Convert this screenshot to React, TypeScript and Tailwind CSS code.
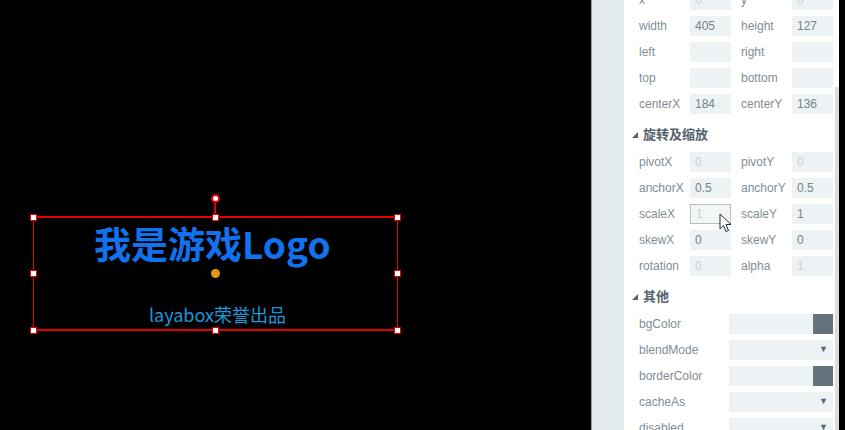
type Cell = { label: string; value?: string; dim?: boolean; focus?: boolean };

const layoutRows: [Cell, Cell][] = [
  [{ label: "x", value: "0", dim: true }, { label: "y", value: "0", dim: true }],
  [{ label: "width", value: "405" }, { label: "height", value: "127" }],
  [{ label: "left" }, { label: "right" }],
  [{ label: "top" }, { label: "bottom" }],
  [{ label: "centerX", value: "184" }, { label: "centerY", value: "136" }],
];

const transformRows: [Cell, Cell][] = [
  [{ label: "pivotX", value: "0", dim: true }, { label: "pivotY", value: "0", dim: true }],
  [{ label: "anchorX", value: "0.5" }, { label: "anchorY", value: "0.5" }],
  [{ label: "scaleX", value: "1", dim: true, focus: true }, { label: "scaleY", value: "1" }],
  [{ label: "skewX", value: "0" }, { label: "skewY", value: "0" }],
  [{ label: "rotation", value: "0", dim: true }, { label: "alpha", value: "1", dim: true }],
];

const otherRows = [
  { label: "bgColor", kind: "color" },
  { label: "blendMode", kind: "select" },
  { label: "borderColor", kind: "color" },
  { label: "cacheAs", kind: "select" },
  { label: "disabled", kind: "select" },
];

function Field({ cell }: { cell: Cell }) {
  return (
    <>
      <span className="w-[51px] text-[12px] text-[#7f8d95]">{cell.label}</span>
      <div
        className={
          "w-[41px] h-[20px] flex items-center px-[5px] text-[12px] " +
          (cell.focus ? "bg-[#f3f6f7] border border-[#b5bdc1] " : "bg-[#edf2f4] ") +
          (cell.dim ? "text-[#c9d1d5]" : "text-[#75848c]")
        }
      >
        {cell.value}
      </div>
    </>
  );
}

function PairRow({ row }: { row: [Cell, Cell] }) {
  return (
    <div className="h-[26px] flex items-center pl-[15px]">
      <Field cell={row[0]} />
      <div className="w-[10px]" />
      <Field cell={row[1]} />
    </div>
  );
}

function Header({ title }: { title: string }) {
  return (
    <div className="h-[32px] flex items-center pt-[4px] pl-[8px] gap-[5px]">
      <svg width="6" height="6" viewBox="0 0 6 6">
        <polygon points="6,0 6,6 0,6" fill="#56636b" />
      </svg>
      <span className="text-[13px] font-bold text-[#55636b]">{title}</span>
    </div>
  );
}

function Handle({ x, y }: { x: number; y: number }) {
  return (
    <div
      className="absolute w-[7px] h-[7px] bg-white border border-[#e00000]"
      style={{ left: x - 3, top: y - 3 }}
    />
  );
}

export default function App() {
  const handles = [
    [33, 217], [215, 217], [397, 217],
    [33, 273], [397, 273],
    [33, 330], [215, 330], [397, 330],
  ];
  return (
    <div
      className="w-[845px] h-[430px] flex bg-black overflow-hidden"
      style={{ fontFamily: '"Liberation Sans", "Noto Sans CJK SC", sans-serif' }}
    >
      {/* canvas */}
      <div className="relative w-[591px] h-full bg-black shrink-0">
        <div className="absolute left-[33px] top-[216px] w-[365px] h-[115px] border-y-2 border-x border-[#e00000]" />
        <div className="absolute left-[214px] top-[200px] w-[2px] h-[16px] bg-[#e00000]" />
        <div className="absolute left-[211px] top-[194px] w-[9px] h-[9px] rounded-full bg-white border-2 border-[#e00000]" />
        {handles.map(([x, y], i) => (
          <Handle key={i} x={x} y={y} />
        ))}
        <div className="absolute left-[211px] top-[269px] w-[9px] h-[9px] rounded-full bg-[#e0990f]" />
        <div
          className="absolute left-[94px] top-[219px] text-[37px] leading-[48px] font-bold text-[#1272ee] whitespace-nowrap"
          style={{ fontFamily: '"Noto Sans CJK SC", sans-serif' }}
        >
          我是游戏Logo
        </div>
        <div
          className="absolute left-[149px] top-[301px] text-[18px] leading-[26px] text-[#1a98dc] whitespace-nowrap"
          style={{ fontFamily: '"Noto Sans CJK SC", sans-serif' }}
        >
          layabox荣誉出品
        </div>
      </div>

      {/* property panel */}
      <div className="w-px h-full bg-[#9aa3a8]" />
      <div className="w-[32px] h-full bg-[#e3eaec]" />
      <div className="relative w-[211px] h-full bg-white overflow-hidden">
        <div className="-mt-[13px]">
          {layoutRows.map((r, i) => (
            <PairRow key={i} row={r} />
          ))}
          <Header title="旋转及缩放" />
          {transformRows.map((r, i) => (
            <PairRow key={i} row={r} />
          ))}
          <Header title="其他" />
          {otherRows.map((r) => (
            <div key={r.label} className="h-[26px] flex items-center pl-[15px]">
              <span className="w-[90px] text-[12px] text-[#7f8d95]">{r.label}</span>
              <div className="w-[104px] h-[20px] bg-[#edf2f4] flex items-center justify-end">
                {r.kind === "color" ? (
                  <div className="w-[20px] h-[20px] bg-[#62737c]" />
                ) : (
                  <span className="text-[9px] text-[#5b6870] pr-[5px]">▼</span>
                )}
              </div>
            </div>
          ))}
        </div>
        <svg
          className="absolute left-[95px] top-[213px]"
          width="14"
          height="20"
          viewBox="0 0 14 20"
        >
          <path
            d="M1 1 L1 16 L4.5 12.5 L7 18.5 L9.5 17.5 L7 11.5 L12 11.5 Z"
            fill="white"
            stroke="#1b2a4a"
            strokeWidth="1"
            strokeLinejoin="round"
          />
        </svg>
      </div>
      <div className="w-[4px] h-full flex flex-col bg-white">
        <div className="h-[87px]" />
        <div className="flex-1 bg-[#d6dee1]" />
      </div>
    </div>
  );
}
